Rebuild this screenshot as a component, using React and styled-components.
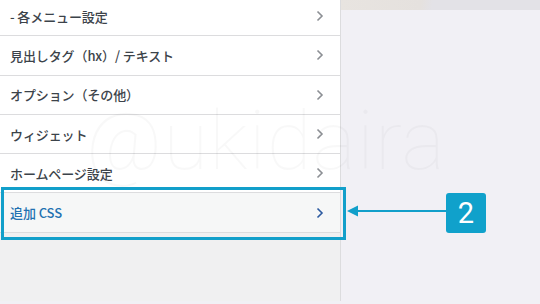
import { createGlobalStyle, styled } from "styled-components";

const Global = createGlobalStyle`
  html, body { margin: 0; padding: 0; }
  body {
    width: 540px;
    height: 304px;
    overflow: hidden;
    font-family: "Noto Sans CJK JP", "Noto Sans", sans-serif;
  }
`;

const Screen = styled.div`
  position: relative;
  display: flex;
  width: 540px;
  height: 304px;
  overflow: hidden;
  background: #f1f0f5;
`;

const Sidebar = styled.div`
  width: 340px;
  height: 100%;
  background: #f0f0f1;
  border-right: 1px solid #dcdcde;
  display: flex;
  flex-direction: column;
  margin-top: -3px;
`;

const Row = styled.div`
  box-sizing: border-box;
  height: 39.3px;
  flex-shrink: 0;
  display: flex;
  align-items: center;
  justify-content: space-between;
  padding: 0 16px 0 10px;
  background: ${(p) => (p.$active ? "#f6f7f7" : "#fff")};
  border-bottom: 1px solid #dcdcde;
  color: ${(p) => (p.$active ? "#2271b1" : "#3c434a")};
  font-size: 13px;
  font-weight: 500;
  letter-spacing: -0.1px;
`;

const Chevron = ({ color }) => (
  <svg width="8" height="12" viewBox="0 0 8 12">
    <path d="M1.5 1.5 L6 6 L1.5 10.5" fill="none" stroke={color} strokeWidth="1.6" />
  </svg>
);

const Preview = styled.div`
  flex: 1;
  display: flex;
  flex-direction: column;
`;

const TopStrip = styled.div`
  height: 10px;
  background: linear-gradient(100deg, #e8e4e0 0%, #e5e1de 40%, #e3e2e7 46%, #e3e2e7 100%);
`;

const Watermark = styled.div`
  position: absolute;
  left: 86px;
  top: 100px;
  font-family: Roboto, sans-serif;
  font-weight: 100;
  font-size: 82px;
  letter-spacing: 1px;
  color: rgba(0, 0, 0, 0.028);
  pointer-events: none;
  line-height: 1;
`;

const Highlight = styled.div`
  position: absolute;
  left: 1px;
  top: 187px;
  width: 345px;
  height: 53px;
  box-sizing: border-box;
  border: 3px solid #129fca;
`;

const Arrow = styled.div`
  position: absolute;
  left: 347px;
  top: 205px;
  width: 100px;
  height: 12px;
  display: flex;
  align-items: center;
`;

const Badge = styled.div`
  position: absolute;
  left: 446px;
  top: 193px;
  width: 40px;
  height: 40px;
  border-radius: 3px;
  background: #10a1cb;
  color: #fff;
  display: flex;
  align-items: center;
  justify-content: center;
  font-family: Roboto, "Liberation Sans", sans-serif;
  font-size: 29px;
`;

const items = [
  "- 各メニュー設定",
  "見出しタグ（hx）/ テキスト",
  "オプション（その他）",
  "ウィジェット",
  "ホームページ設定",
];

export default function App() {
  return (
    <>
      <Global />
      <Screen>
        <Sidebar>
          {items.map((t) => (
            <Row key={t}>
              <span>{t}</span>
              <Chevron color="#8c8f94" />
            </Row>
          ))}
          <Row $active>
            <span>追加 CSS</span>
            <Chevron color="#2c5aa0" />
          </Row>
        </Sidebar>
        <Preview>
          <TopStrip />
        </Preview>
        <Watermark>@ukidaira</Watermark>
        <Highlight />
        <Arrow>
          <svg width="100" height="12" viewBox="0 0 100 12">
            <polygon points="0,6 11,0.5 11,11.5" fill="#129fca" />
            <rect x="10" y="5" width="90" height="2" fill="#129fca" />
          </svg>
        </Arrow>
        <Badge>2</Badge>
      </Screen>
    </>
  );
}
